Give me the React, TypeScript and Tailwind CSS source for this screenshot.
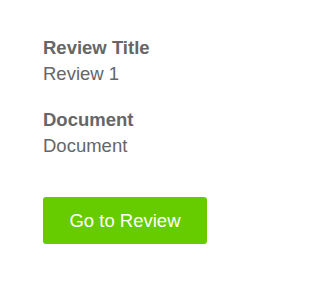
export default function App() {
  const fields = [
    { label: "Review Title", value: "Review 1" },
    { label: "Document", value: "Document" },
  ];

  return (
    <div className="flex min-h-screen flex-col items-start bg-white pl-[43px] pt-[35px] font-['Liberation_Sans',Arial,sans-serif] text-[18.5px] leading-[26px] text-[#666]">
      <div className="flex flex-col gap-[20px]">
        {fields.map((field) => (
          <div key={field.label}>
            <div className="font-bold">{field.label}</div>
            <div>{field.value}</div>
          </div>
        ))}
      </div>
      <button
        type="button"
        className="mt-[38px] h-[47px] w-[164px] rounded-[3px] bg-[#66cc00] text-center text-[18.5px] text-white"
      >
        Go to Review
      </button>
    </div>
  );
}
